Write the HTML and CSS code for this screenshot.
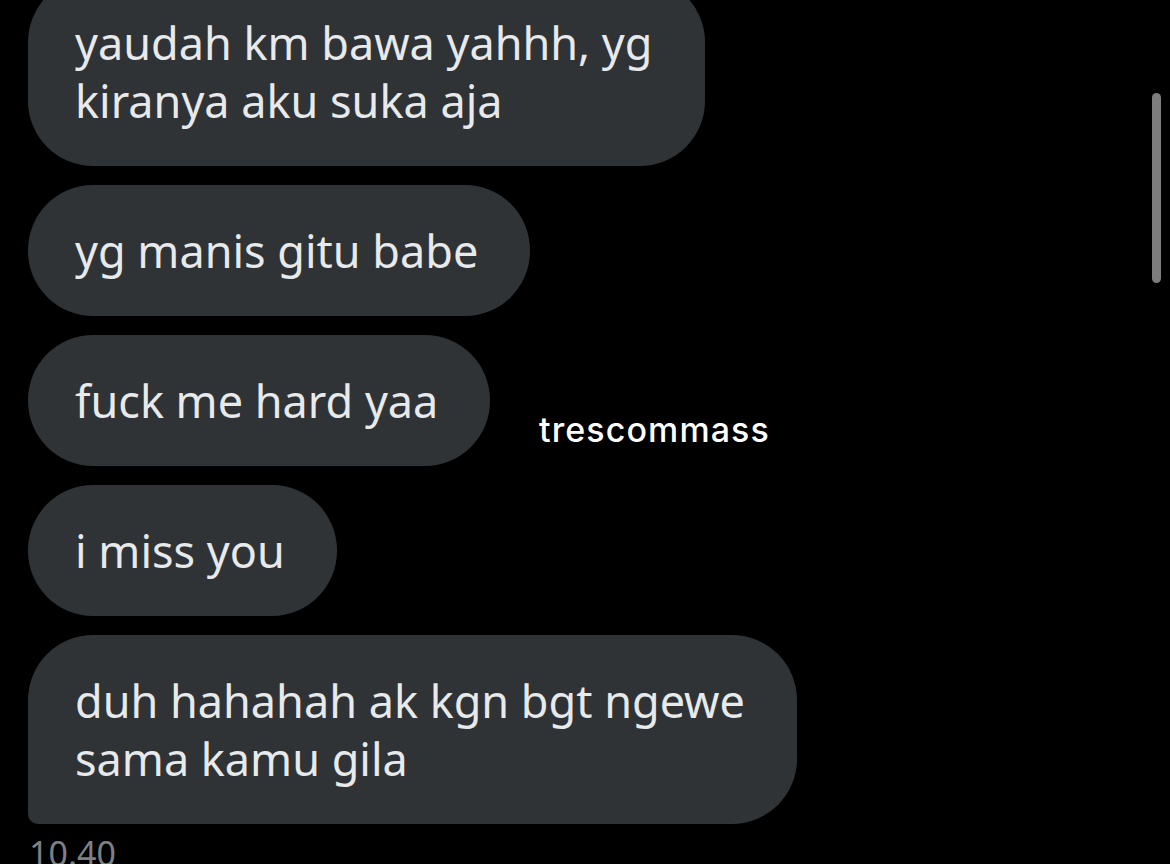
FILE: index.html
```html
<!DOCTYPE html>
<html>
<head>
<meta charset="utf-8">
<link rel="stylesheet" href="styles.css">
</head>
<body>
<div class="screen">
  <div class="thread">
    <div class="bubble">yaudah km bawa yahhh, yg<br>kiranya aku suka aja</div>
    <div class="bubble">yg manis gitu babe</div>
    <div class="bubble">fuck me hard yaa</div>
    <div class="bubble">i miss you</div>
    <div class="bubble last">duh hahahah ak kgn bgt ngewe<br>sama kamu gila</div>
    <div class="time">10.40</div>
  </div>
  <div class="scrollbar"></div>
  <div class="watermark">trescommass</div>
</div>
</body>
</html>
```
FILE: styles.css
```css
html, body {
  margin: 0;
  padding: 0;
  background: #000;
}
.screen {
  position: relative;
  width: 1170px;
  height: 864px;
  overflow: hidden;
  background: #000;
}
.thread {
  display: flex;
  flex-direction: column;
  align-items: flex-start;
  gap: 19px;
  padding-left: 28px;
  margin-top: -23px;
}
.bubble {
  background: #2f3336;
  color: #e7e9ea;
  font-family: "Noto Sans", sans-serif;
  font-size: 45px;
  line-height: 58px;
  padding: 36.5px 52px 36.5px 47px;
  border-radius: 65px;
}
.bubble.last {
  border-radius: 65px 65px 65px 10px;
}
.time {
  margin-top: -12px;
  color: #7d8185;
  font-family: "Noto Sans", sans-serif;
  font-size: 34px;
  line-height: 44px;
  padding-left: 1px;
}
.scrollbar {
  position: absolute;
  left: 1152px;
  top: 93px;
  width: 9px;
  height: 190px;
  border-radius: 5px;
  background: #7d7d7d;
}
.watermark {
  position: absolute;
  left: 539px;
  top: 409px;
  color: #fff;
  font-family: "Inter", sans-serif;
  font-size: 34px;
  font-weight: 500;
  letter-spacing: 1.1px;
}
```
